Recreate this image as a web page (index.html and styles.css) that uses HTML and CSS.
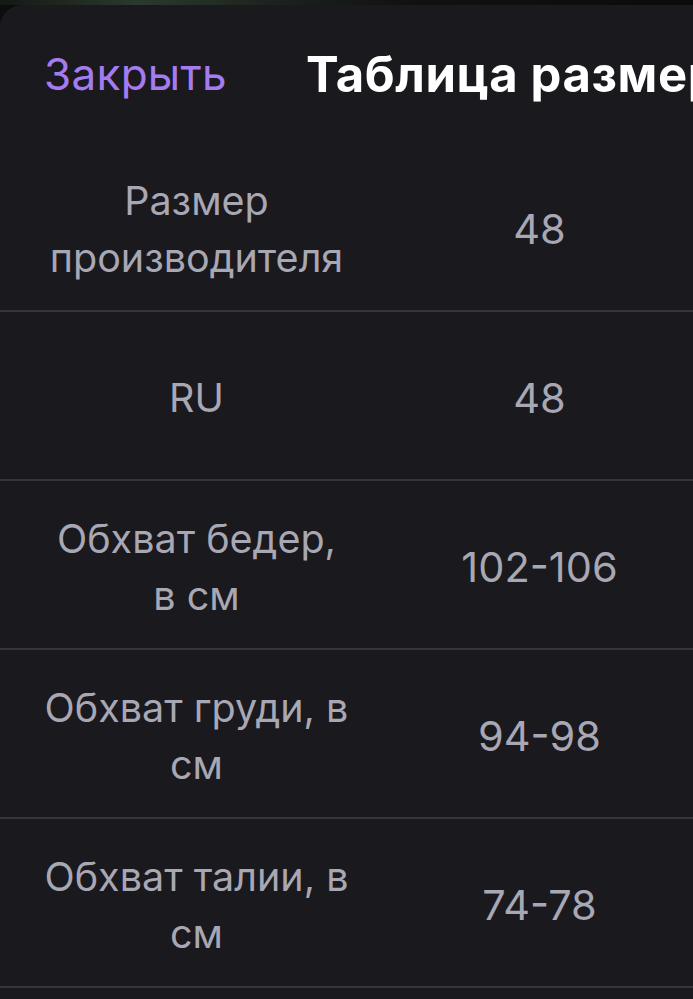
FILE: index.html
```html
<!DOCTYPE html>
<html lang="ru">
<head>
<meta charset="utf-8">
<title>Таблица размеров</title>
<link rel="stylesheet" href="styles.css">
</head>
<body>
<div class="topstrip"></div>
<div class="sheet">
  <header class="header">
    <span class="close">Закрыть</span>
    <h1 class="title">Таблица размеров</h1>
  </header>
  <div class="table">
    <div class="row">
      <div class="cell">Размер<br>производителя</div>
      <div class="cell num">48</div>
    </div>
    <div class="row">
      <div class="cell">RU</div>
      <div class="cell num">48</div>
    </div>
    <div class="row">
      <div class="cell">Обхват бедер,<br>в см</div>
      <div class="cell num">102-106</div>
    </div>
    <div class="row">
      <div class="cell">Обхват груди, в<br>см</div>
      <div class="cell num">94-98</div>
    </div>
    <div class="row">
      <div class="cell">Обхват талии, в<br>см</div>
      <div class="cell num">74-78</div>
    </div>
  </div>
</div>
</body>
</html>
```

FILE: styles.css
```css
html, body {
  margin: 0;
  padding: 0;
}
body {
  width: 693px;
  height: 999px;
  overflow: hidden;
  background: #0c0d0c;
  font-family: Inter, "Noto Sans", sans-serif;
}
.topstrip {
  height: 5px;
  background: linear-gradient(90deg, #151815 0%, #2a3a2c 20%, #1c221d 40%, #101110 60%, #0b0b0b 100%);
}
.sheet {
  background: #1a191e;
  border-top-left-radius: 22px;
  height: 994px;
  overflow: hidden;
}
.header {
  display: flex;
  align-items: center;
  height: 138px;
  padding-left: 44px;
  white-space: nowrap;
  overflow: hidden;
}
.close {
  color: #a57cf0;
  font-size: 44px;
  font-weight: 400;
  letter-spacing: 0.3px;
}
.title {
  margin: 0 0 0 79px;
  color: #ffffff;
  font-size: 49px;
  font-weight: 700;
  letter-spacing: 0.6px;
}
.table {
  display: flex;
  flex-direction: column;
}
.row {
  display: grid;
  grid-template-columns: 343px 343px;
  padding-left: 25px;
  height: 167px;
  border-bottom: 2px solid #36353b;
  width: 693px;
  box-sizing: content-box;
}
.cell {
  display: flex;
  align-items: center;
  justify-content: center;
  text-align: center;
  padding-top: 6px;
  color: #a8a7b4;
  font-size: 39.5px;
  line-height: 57px;
}
.num {
  font-size: 41.5px;
}
```
